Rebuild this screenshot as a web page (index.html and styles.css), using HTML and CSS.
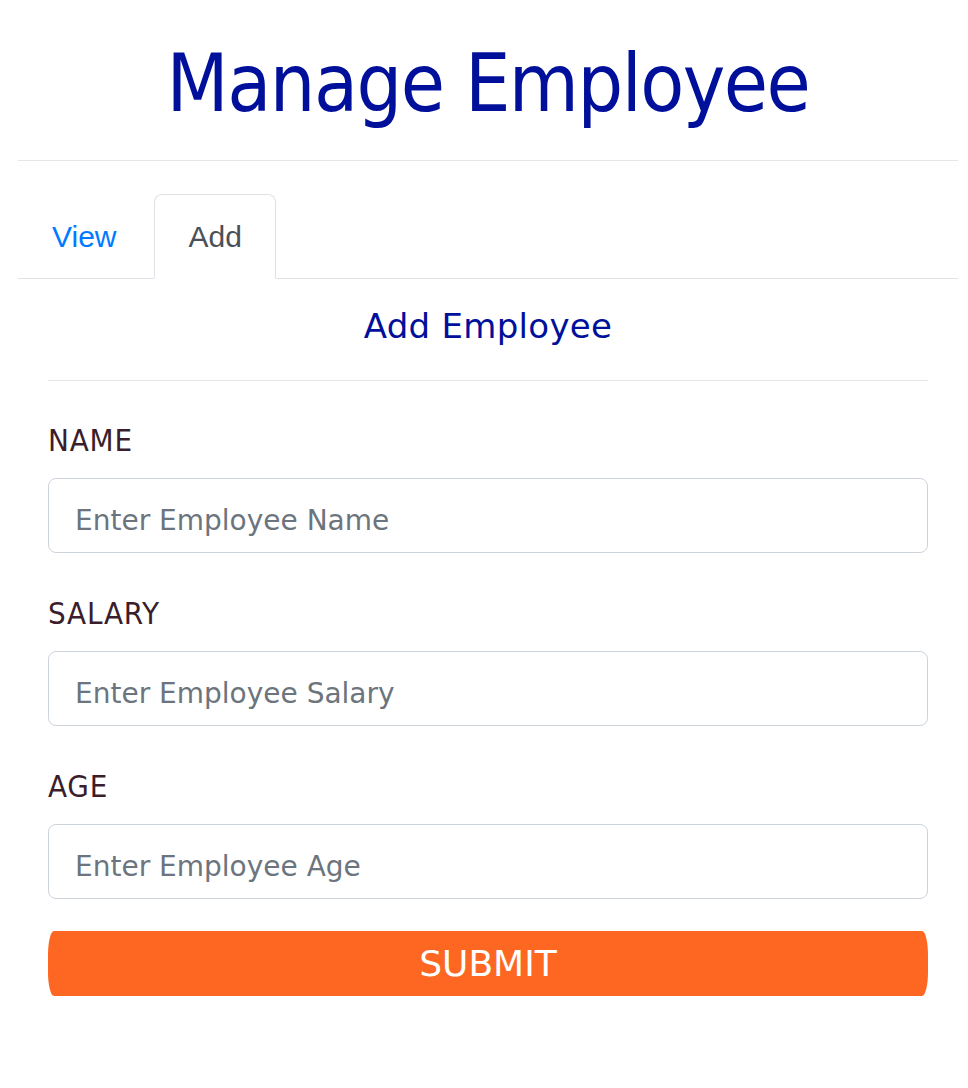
FILE: index.html
```html
<!DOCTYPE html>
<html>
<head>
<meta charset="utf-8">
<title>Manage Employee</title>
<link rel="stylesheet" href="styles.css">
</head>
<body>
<div class="wrap">
  <h1 class="title">Manage Employee</h1>
  <hr class="rule">
  <ul class="tabs">
    <li class="tab"><a class="tab-link" href="#">View</a></li>
    <li class="tab"><a class="tab-link active" href="#">Add</a></li>
  </ul>
  <div class="panel">
    <h2 class="panel-title">Add Employee</h2>
    <hr class="panel-rule">
    <form class="form">
      <div class="group">
        <label class="label">NAME</label>
        <input class="field" type="text" placeholder="Enter Employee Name">
      </div>
      <div class="group">
        <label class="label">SALARY</label>
        <input class="field" type="text" placeholder="Enter Employee Salary">
      </div>
      <div class="group">
        <label class="label">AGE</label>
        <input class="field" type="text" placeholder="Enter Employee Age">
      </div>
      <button class="submit" type="button">SUBMIT</button>
    </form>
  </div>
</div>
</body>
</html>
```
FILE: styles.css
```css
html, body {
  margin: 0;
  padding: 0;
  background: #ffffff;
}
.wrap {
  margin: 0 10px 0 18px;
  font-family: "DejaVu Sans", Verdana, sans-serif;
}
.title {
  margin: 36px 0 0;
  font-family: "DejaVu Sans Condensed", "DejaVu Sans", sans-serif;
  font-size: 80px;
  line-height: 96px;
  font-weight: normal;
  color: #00109b;
  text-align: center;
  letter-spacing: -1.5px;
}
.rule {
  margin: 28px 0 0;
  border: 0;
  border-top: 1px solid #e5e5e5;
  height: 0;
}
.tabs {
  list-style: none;
  margin: 33px 0 0;
  padding: 0;
  display: flex;
  gap: 4px;
  border-bottom: 1px solid #dee2e6;
}
.tab {
  margin-bottom: -1px;
}
.tab-link {
  display: block;
  padding: 19px 33px;
  border: 1px solid transparent;
  border-radius: 8px 8px 0 0;
  font-family: "Liberation Sans", Arial, sans-serif;
  font-size: 30px;
  line-height: 45px;
  color: #007bff;
  text-decoration: none;
}
.tab-link.active {
  color: #495057;
  background: #ffffff;
  border-color: #dee2e6 #dee2e6 #ffffff;
}
.panel {
  padding: 0 30px;
}
.panel-title {
  margin: 27px 0 0;
  font-family: "DejaVu Sans", Verdana, sans-serif;
  font-size: 34px;
  line-height: 41px;
  font-weight: normal;
  color: #00109b;
  text-align: center;
  letter-spacing: 0.3px;
}
.panel-rule {
  margin: 33px 0 0;
  border: 0;
  border-top: 1px solid #e5e5e5;
  height: 0;
}
.form {
  display: flex;
  flex-direction: column;
}
.group {
  display: flex;
  flex-direction: column;
  margin-top: 41px;
}
.group + .group {
  margin-top: 42px;
}
.label {
  font-family: "DejaVu Sans Condensed", "DejaVu Sans", sans-serif;
  font-size: 31px;
  line-height: 36px;
  letter-spacing: 0.8px;
  color: #3a1e2c;
}
.field {
  margin-top: 20px;
  box-sizing: border-box;
  height: 75px;
  width: 100%;
  padding: 14px 26px 4px;
  border: 1px solid #cdd3da;
  border-radius: 8px;
  font-family: "DejaVu Sans", Verdana, sans-serif;
  font-size: 28px;
  color: #495057;
  background: #ffffff;
  outline: none;
}
.field::placeholder {
  color: #6c757d;
  opacity: 1;
}
.submit {
  margin-top: 32px;
  height: 65px;
  border: 0;
  border-radius: 6px / 24px;
  background: #fe6722;
  color: #ffffff;
  font-family: "DejaVu Sans", Verdana, sans-serif;
  font-size: 36px;
  padding: 0;
  cursor: pointer;
}
```
